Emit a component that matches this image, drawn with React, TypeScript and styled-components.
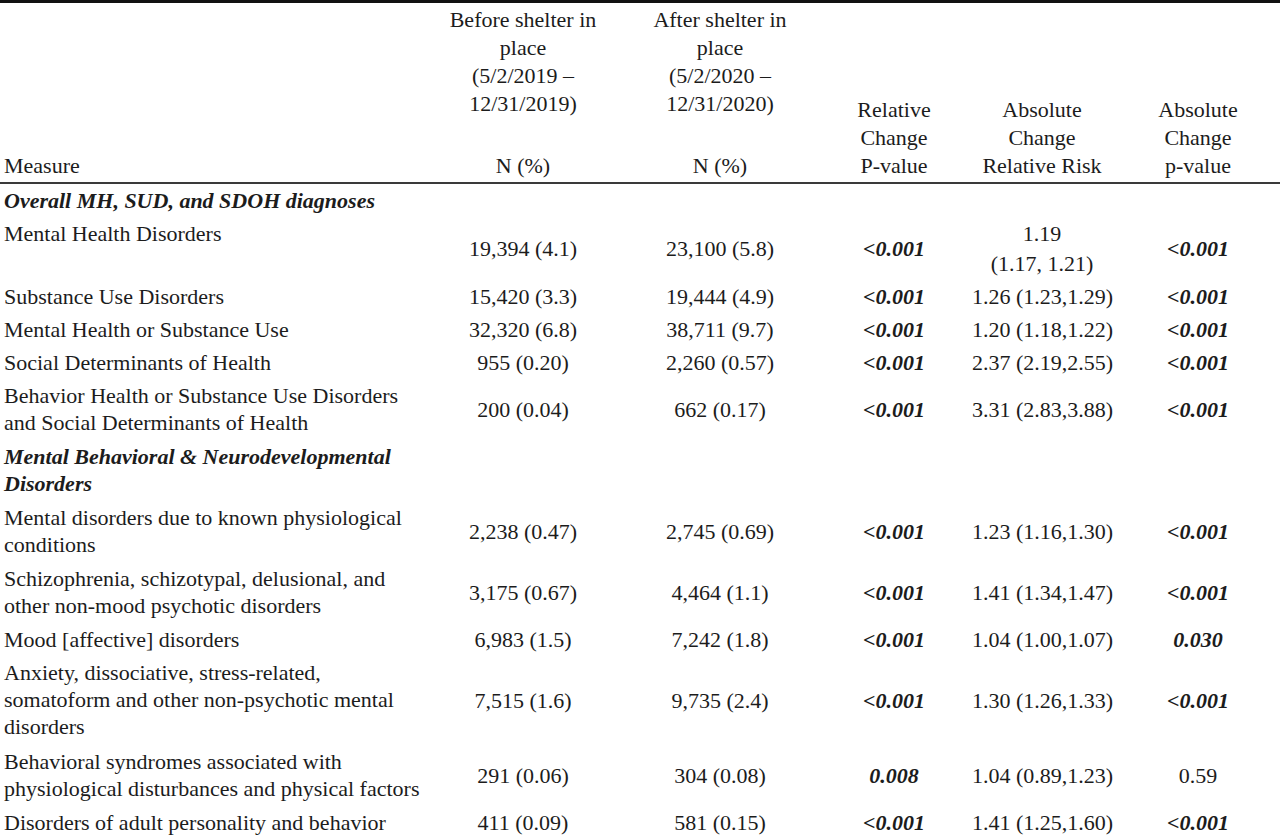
import React from 'react';
import styled, {createGlobalStyle} from 'styled-components';

const GlobalStyle = createGlobalStyle`
  html, body {
    margin: 0;
    padding: 0;
    background: #ffffff;
  }
  body {
    font-family: 'Liberation Serif', 'DejaVu Serif', serif;
    color: #1c1c1c;
  }
`

type Cell = string[];

interface GroupRow {
  kind: 'group';
  title: string[];
}

interface DataRow {
  kind: 'data';
  measure: string[];
  before: string;
  after: string;
  relP: string;
  relPBold?: boolean;
  risk: Cell;
  absP: string;
  absPBold?: boolean;
}

type Row = GroupRow | DataRow;

const rows: Row[] = [
  {kind: 'group', title: ['Overall MH, SUD, and SDOH diagnoses']},
  {kind: 'data', measure: ['Mental Health Disorders'], before: '19,394 (4.1)', after: '23,100 (5.8)', relP: '<0.001', relPBold: true, risk: ['1.19', '(1.17, 1.21)'], absP: '<0.001', absPBold: true},
  {kind: 'data', measure: ['Substance Use Disorders'], before: '15,420 (3.3)', after: '19,444 (4.9)', relP: '<0.001', relPBold: true, risk: ['1.26 (1.23,1.29)'], absP: '<0.001', absPBold: true},
  {kind: 'data', measure: ['Mental Health or Substance Use'], before: '32,320 (6.8)', after: '38,711 (9.7)', relP: '<0.001', relPBold: true, risk: ['1.20 (1.18,1.22)'], absP: '<0.001', absPBold: true},
  {kind: 'data', measure: ['Social Determinants of Health'], before: '955 (0.20)', after: '2,260 (0.57)', relP: '<0.001', relPBold: true, risk: ['2.37 (2.19,2.55)'], absP: '<0.001', absPBold: true},
  {kind: 'data', measure: ['Behavior Health or Substance Use Disorders', 'and Social Determinants of Health'], before: '200 (0.04)', after: '662 (0.17)', relP: '<0.001', relPBold: true, risk: ['3.31 (2.83,3.88)'], absP: '<0.001', absPBold: true},
  {kind: 'group', title: ['Mental Behavioral & Neurodevelopmental', 'Disorders']},
  {kind: 'data', measure: ['Mental disorders due to known physiological', 'conditions'], before: '2,238 (0.47)', after: '2,745 (0.69)', relP: '<0.001', relPBold: true, risk: ['1.23 (1.16,1.30)'], absP: '<0.001', absPBold: true},
  {kind: 'data', measure: ['Schizophrenia, schizotypal, delusional, and', 'other non-mood psychotic disorders'], before: '3,175 (0.67)', after: '4,464 (1.1)', relP: '<0.001', relPBold: true, risk: ['1.41 (1.34,1.47)'], absP: '<0.001', absPBold: true},
  {kind: 'data', measure: ['Mood [affective] disorders'], before: '6,983 (1.5)', after: '7,242 (1.8)', relP: '<0.001', relPBold: true, risk: ['1.04 (1.00,1.07)'], absP: '0.030', absPBold: true},
  {kind: 'data', measure: ['Anxiety, dissociative, stress-related,', 'somatoform and other non-psychotic mental', 'disorders'], before: '7,515 (1.6)', after: '9,735 (2.4)', relP: '<0.001', relPBold: true, risk: ['1.30 (1.26,1.33)'], absP: '<0.001', absPBold: true},
  {kind: 'data', measure: ['Behavioral syndromes associated with', 'physiological disturbances and physical factors'], before: '291 (0.06)', after: '304 (0.08)', relP: '0.008', relPBold: true, risk: ['1.04 (0.89,1.23)'], absP: '0.59'},
  {kind: 'data', measure: ['Disorders of adult personality and behavior'], before: '411 (0.09)', after: '581 (0.15)', relP: '<0.001', relPBold: true, risk: ['1.41 (1.25,1.60)'], absP: '<0.001', absPBold: true},
];

const Page = styled.div`
  width: 1280px;
  height: 835px;
  overflow: hidden;
  background: #ffffff;
`

const Table = styled.table`
  width: 1280px;
  border-collapse: collapse;
  table-layout: fixed;
  border-top: 3px solid #111111;
  font-size: 22px;
  line-height: 27px;
`

const HeadCell = styled.th<{align?: 'left' | 'center'}>`
  font-weight: normal;
  text-align: ${({align}) => align || 'center'};
  vertical-align: bottom;
  padding: 3px 4px 2px;
  line-height: 28px;
  border-bottom: 2px solid #3a3a3a;
  white-space: nowrap;
`

const PeriodBlock = styled.div`
  margin-bottom: 34px;
`

const Td = styled.td`
  text-align: center;
  vertical-align: middle;
  padding: 3px 4px;
  white-space: nowrap;
`

// multi-line labels get a touch more room below, as in the source table
const MeasureCell = styled.td<{lines: number}>`
  text-align: left;
  vertical-align: top;
  padding: 3px 4px ${({lines}) => 3 + (lines - 1)}px;
  white-space: nowrap;
`

const GroupTitle = styled(MeasureCell)`
  font-style: italic;
  font-weight: bold;
`

const Line = styled.div<{gap?: number}>`
  margin-top: ${({gap}) => gap || 0}px;
`

const PValue = styled.span<{bold?: boolean}>`
  font-style: ${({bold}) => bold ? 'italic' : 'normal'};
  font-weight: ${({bold}) => bold ? 'bold' : 'normal'};
`

const App = () => {
  return (
    <>
      <GlobalStyle/>
      <Page>
        <Table>
          <colgroup>
            <col style={{width: 426}}/>
            <col style={{width: 194}}/>
            <col style={{width: 200}}/>
            <col style={{width: 148}}/>
            <col style={{width: 148}}/>
            <col style={{width: 164}}/>
          </colgroup>
          <thead>
            <tr>
              <HeadCell align='left'>Measure</HeadCell>
              <HeadCell>
                <PeriodBlock>
                  <div>Before shelter in</div>
                  <div>place</div>
                  <div>(5/2/2019 –</div>
                  <div>12/31/2019)</div>
                </PeriodBlock>
                <div>N (%)</div>
              </HeadCell>
              <HeadCell>
                <PeriodBlock>
                  <div>After shelter in</div>
                  <div>place</div>
                  <div>(5/2/2020 –</div>
                  <div>12/31/2020)</div>
                </PeriodBlock>
                <div>N (%)</div>
              </HeadCell>
              <HeadCell>
                <div>Relative</div>
                <div>Change</div>
                <div>P-value</div>
              </HeadCell>
              <HeadCell>
                <div>Absolute</div>
                <div>Change</div>
                <div>Relative Risk</div>
              </HeadCell>
              <HeadCell>
                <div>Absolute</div>
                <div>Change</div>
                <div>p-value</div>
              </HeadCell>
            </tr>
          </thead>
          <tbody>
            {rows.map((row, i) => row.kind === 'group' ? (
              <tr key={`group-${i}`}>
                <GroupTitle lines={row.title.length}>
                  {row.title.map(t => <div key={t}>{t}</div>)}
                </GroupTitle>
                <Td/><Td/><Td/><Td/><Td/>
              </tr>
            ) : (
              <tr key={`row-${i}`}>
                <MeasureCell lines={row.measure.length}>
                  {row.measure.map(m => <div key={m}>{m}</div>)}
                </MeasureCell>
                <Td>{row.before}</Td>
                <Td>{row.after}</Td>
                <Td><PValue bold={row.relPBold}>{row.relP}</PValue></Td>
                <Td>
                  {row.risk.map((r, j) => <Line key={r} gap={j > 0 ? 3 : 0}>{r}</Line>)}
                </Td>
                <Td><PValue bold={row.absPBold}>{row.absP}</PValue></Td>
              </tr>
            ))}
          </tbody>
        </Table>
      </Page>
    </>
  )
}

export default App;
